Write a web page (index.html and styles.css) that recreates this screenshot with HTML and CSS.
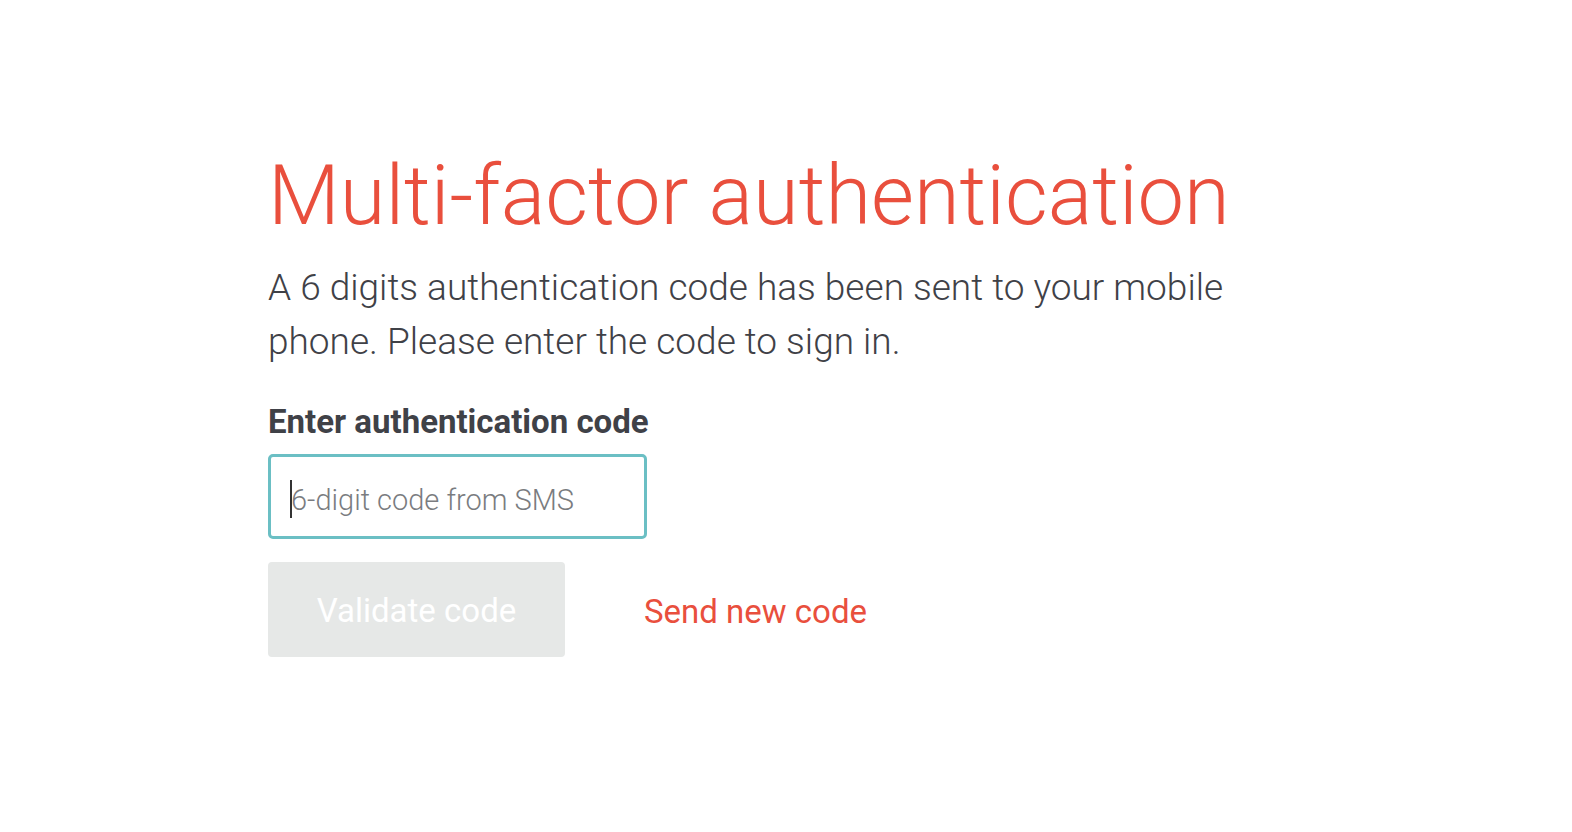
FILE: index.html
```html
<!DOCTYPE html>
<html>
<head>
<meta charset="utf-8">
<link rel="stylesheet" href="styles.css">
</head>
<body>
<main class="page">
  <h1 class="title">Multi-factor authentication</h1>
  <p class="intro">A 6 digits authentication code has been sent to your mobile phone. Please enter the code to sign in.</p>
  <label class="label" for="code">Enter authentication code</label>
  <div class="field"><span class="caret"></span><span class="placeholder">6-digit code from SMS</span></div>
  <div class="actions">
    <button class="btn" disabled>Validate code</button>
    <a class="link" href="#">Send new code</a>
  </div>
</main>
</body>
</html>
```
FILE: styles.css
```css
html, body { margin: 0; padding: 0; background: #fff; }
body { font-family: Roboto, "Noto Sans", sans-serif; }
.page { padding: 148px 0 0 268px; width: 1000px; }
.title {
  margin: 0;
  font-weight: 300;
  font-size: 83px;
  line-height: 96px;
  color: #e94f3d;
}
.intro {
  margin: 17px 0 0;
  font-weight: 300;
  font-size: 37px;
  line-height: 54px;
  color: #3f4147;
  width: 990px;
}
.label {
  display: block;
  margin-top: 33px;
  font-weight: 700;
  font-size: 33px;
  line-height: 40px;
  color: #3f4147;
}
.field {
  margin-top: 12px;
  width: 379px;
  height: 85px;
  box-sizing: border-box;
  border: 3px solid #6bbfc4;
  border-radius: 5px;
  display: flex;
  align-items: center;
  padding-left: 19px;
}
.caret { width: 2px; height: 38px; background: #333; margin-right: -1px; margin-top: 4px; }
.placeholder { font-size: 29px; font-weight: 300; color: #7a7c80; padding-top: 6px; }
.actions { margin-top: 23px; display: flex; align-items: center; gap: 79px; }
.btn {
  width: 297px;
  height: 95px;
  border: 0;
  border-radius: 4px;
  background: #e6e8e7;
  color: #fff;
  font-family: Roboto, sans-serif;
  font-size: 33px;
  font-weight: 400;
  padding-top: 3px;
}
.link { color: #e94f3d; text-decoration: none; font-size: 33px; padding-top: 3px; }
```
